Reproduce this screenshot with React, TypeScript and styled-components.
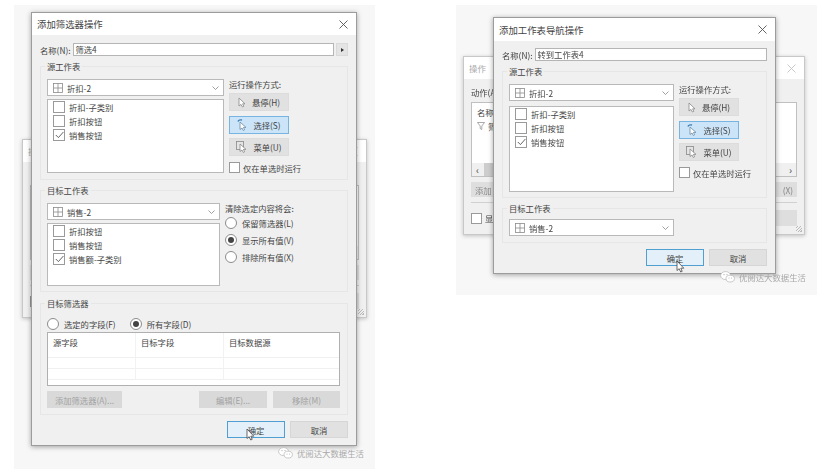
import React from "react";
import styled, { createGlobalStyle } from "styled-components";

const GlobalStyle = createGlobalStyle`
  html, body {
    margin: 0;
    padding: 0;
    background: #fff;
    overflow: hidden;
  }
  body {
    font-family: "Noto Sans CJK SC", "Liberation Sans", sans-serif;
    font-size: 8.3px;
    color: #444;
  }
`;

const SheetIcon = () => (
  <svg width="10" height="10" viewBox="0 0 10 10" fill="none" stroke="#8a8a8a" strokeWidth="0.8">
    <rect x="0.5" y="0.5" width="9" height="9" />
    <path d="M5 0.5V9.5M0.5 5H9.5" />
  </svg>
);

const Chevron = () => (
  <svg width="7" height="4" viewBox="0 0 7 4" fill="none" stroke="#888" strokeWidth="0.8">
    <path d="M0.5 0.5L3.5 3.5L6.5 0.5" />
  </svg>
);

const CloseIcon = ({ color = "#555" }: { color?: string }) => (
  <svg width="9" height="9" viewBox="0 0 9 9" fill="none" stroke={color} strokeWidth="0.9">
    <path d="M0.5 0.5L8.5 8.5M8.5 0.5L0.5 8.5" />
  </svg>
);

const CheckMark = () => (
  <svg width="9" height="8" viewBox="0 0 9 8" fill="none" stroke="#555" strokeWidth="0.9">
    <path d="M0.8 4L3.4 6.6L8.4 1" />
  </svg>
);

const HoverCursor = () => (
  <svg width="8" height="11" viewBox="0 0 8 11" fill="#fff" stroke="#888" strokeWidth="0.8">
    <path d="M1 1V9L3 7.4L4.4 10L5.8 9.3L4.6 6.8H7Z" />
  </svg>
);

const SelectCursor = () => (
  <svg width="10" height="12" viewBox="0 0 10 12" fill="#fff" stroke="#6a8aa5" strokeWidth="0.8">
    <path d="M1 2.5a3 2 0 0 1 4-1.5" stroke="#3f7fb5" strokeWidth="1.4" fill="none" />
    <path d="M3 3V10.5L5 9L6.3 11.5L7.6 10.8L6.4 8.4H9Z" />
  </svg>
);

const MenuCursor = () => (
  <svg width="11" height="12" viewBox="0 0 11 12" fill="#fff" stroke="#888" strokeWidth="0.8">
    <rect x="0.5" y="0.5" width="7" height="8" fill="#e4e4e4" />
    <path d="M4 3V10.5L6 9L7.3 11.5L8.6 10.8L7.4 8.4H10Z" />
  </svg>
);

const WeChatIcon = () => (
  <svg width="15" height="12" viewBox="0 0 15 12" fill="#fff" stroke="#b5b5b5" strokeWidth="0.7">
    <ellipse cx="5.6" cy="4.6" rx="5" ry="4" />
    <ellipse cx="10.2" cy="7.6" rx="4.2" ry="3.4" />
    <circle cx="4" cy="3.6" r="0.6" fill="#aaa" stroke="none" />
    <circle cx="7" cy="3.6" r="0.6" fill="#aaa" stroke="none" />
    <circle cx="9" cy="7" r="0.5" fill="#aaa" stroke="none" />
    <circle cx="11.6" cy="7" r="0.5" fill="#aaa" stroke="none" />
  </svg>
);

const MouseCursor = () => (
  <svg width="9" height="13" viewBox="0 0 9 13" fill="#fff" stroke="#444" strokeWidth="0.8">
    <path d="M1 1V10.5L3.2 8.7L4.7 12L6.2 11.3L4.8 8.2H7.8Z" />
  </svg>
);

const Page = styled.div`
  width: 818px;
  height: 469px;
  display: flex;
  align-items: flex-start;
  padding: 5px 1px 0 14px;
  box-sizing: border-box;
  gap: 81px;
  filter: blur(0.45px);
`;

const Shot = styled.div<{ $height: number }>`
  position: relative;
  width: 361px;
  height: ${(p) => p.$height}px;
  background: #f7f7f7;
  flex: none;
`;

const Win = styled.div<{ $x: number; $y: number; $w: number; $h: number }>`
  position: absolute;
  left: ${(p) => p.$x}px;
  top: ${(p) => p.$y}px;
  width: ${(p) => p.$w}px;
  height: ${(p) => p.$h}px;
  box-sizing: border-box;
  background: #f0f0f0;
  border: 1px solid #9c9c9c;
  box-shadow: 0 1px 5px rgba(0, 0, 0, 0.35);
  display: flex;
  flex-direction: column;
`;

const BackWin = styled(Win)`
  border-color: #c8c8c8;
  box-shadow: 0 1px 4px rgba(0, 0, 0, 0.22);
`;

const TitleBar = styled.div<{ $height: number; $inactive?: boolean }>`
  height: ${(p) => p.$height}px;
  flex: none;
  background: #fff;
  display: flex;
  align-items: center;
  justify-content: space-between;
  padding: 0 8px 0 5px;
  font-size: ${(p) => (p.$inactive ? 8.5 : 9.4)}px;
  color: ${(p) => (p.$inactive ? "#aaa" : "#444")};
`;

const Body = styled.div<{ $top: number }>`
  padding: ${(p) => p.$top}px 8px 0 8px;
  display: flex;
  flex-direction: column;
`;

const NameRow = styled.div`
  display: flex;
  align-items: center;
  height: 13px;
  gap: 2px;
`;

const NameInput = styled.div`
  flex: 1;
  height: 13px;
  box-sizing: border-box;
  background: #fff;
  border: 1px solid #b5b5b5;
  padding-left: 2px;
  line-height: 11px;
`;

const ArrowButton = styled.div`
  width: 10px;
  height: 11px;
  background: #e4e4e4;
  border: 1px solid #dadada;
  display: flex;
  align-items: center;
  justify-content: center;
  &::after {
    content: "";
    border-left: 3px solid #333;
    border-top: 2px solid transparent;
    border-bottom: 2px solid transparent;
  }
`;

const Group = styled.div<{ $mt: number; $height: number; $pt: number }>`
  position: relative;
  margin-top: ${(p) => p.$mt}px;
  height: ${(p) => p.$height}px;
  box-sizing: border-box;
  padding: ${(p) => p.$pt}px 7px 0 6px;
  border: 1px solid #e6e6e6;
`;

const Legend = styled.span`
  position: absolute;
  left: 4px;
  top: -7px;
  padding: 0 2px;
  background: #f0f0f0;
  line-height: 12px;
`;

const Columns = styled.div<{ $left: number }>`
  display: grid;
  grid-template-columns: ${(p) => p.$left}px 1fr;
  column-gap: 5px;
`;

const Stack = styled.div`
  display: flex;
  flex-direction: column;
`;

const SelectBox = styled.div<{ $width?: number }>`
  width: ${(p) => (p.$width ? `${p.$width}px` : "auto")};
  height: 17px;
  box-sizing: border-box;
  background: #fff;
  border: 1px solid #b9b9b9;
  display: flex;
  align-items: center;
  padding: 0 4px 0 5px;
  gap: 4px;
  span {
    flex: 1;
  }
`;

const ListBox = styled.div<{ $height: number; $mt: number }>`
  margin-top: ${(p) => p.$mt}px;
  height: ${(p) => p.$height}px;
  box-sizing: border-box;
  background: #fff;
  border: 1px solid #b9b9b9;
  padding-left: 5px;
  display: flex;
  flex-direction: column;
`;

const CheckRow = styled.div<{ $gap?: number }>`
  display: flex;
  align-items: center;
  gap: ${(p) => p.$gap ?? 4}px;
  height: 14px;
  flex: none;
`;

const Box = styled.div<{ $size?: number }>`
  width: ${(p) => p.$size ?? 12}px;
  height: ${(p) => p.$size ?? 12}px;
  box-sizing: border-box;
  flex: none;
  background: #fff;
  border: 1px solid #9a9a9a;
  display: flex;
  align-items: center;
  justify-content: center;
`;

const SideLabel = styled.div<{ $height: number }>`
  height: ${(p) => p.$height}px;
  line-height: 11px;
`;

const ModeButton = styled.div<{ $active?: boolean }>`
  width: 60px;
  height: 18px;
  box-sizing: border-box;
  margin-bottom: 4.5px;
  display: flex;
  align-items: center;
  justify-content: center;
  gap: 6px;
  background: ${(p) => (p.$active ? "#cbe4f8" : "#e1e1e1")};
  border: 1px solid ${(p) => (p.$active ? "#78b4e2" : "#dcdcdc")};
`;

const RadioRow = styled.div<{ $height?: number }>`
  display: flex;
  align-items: center;
  gap: 5px;
  height: ${(p) => p.$height ?? 17}px;
`;

const Radio = styled.div<{ $on?: boolean }>`
  width: 10px;
  height: 10px;
  flex: none;
  border-radius: 50%;
  background: #fff;
  border: 1px solid #8c8c8c;
  display: flex;
  align-items: center;
  justify-content: center;
  &::after {
    content: "";
    width: 6px;
    height: 6px;
    border-radius: 50%;
    background: ${(p) => (p.$on ? "#444" : "transparent")};
  }
`;

const RadioLine = styled.div`
  display: flex;
  gap: 14px;
  height: 14px;
  align-items: center;
`;

const FieldTable = styled.div`
  margin-top: 1px;
  height: 54px;
  box-sizing: border-box;
  background: #fff;
  border: 1px solid #b0b0b0;
  display: grid;
  grid-template-columns: 88px 88px 1fr;
  grid-template-rows: 25px 11px 11px 1fr;
`;

const FieldCell = styled.div<{ $last?: boolean }>`
  padding: 3px 0 0 5px;
  border-right: ${(p) => (p.$last ? "none" : "1px solid #f2f2f2")};
  border-bottom: 1px solid #f0f0f0;
`;

const ActionRow = styled.div`
  margin-top: 5px;
  display: flex;
  gap: 6px;
`;

const GreyButton = styled.div<{ $width: number; $push?: boolean }>`
  width: ${(p) => p.$width}px;
  height: 17px;
  margin-left: ${(p) => (p.$push ? "auto" : "0")};
  background: #d9d9d9;
  color: #a2a2a2;
  display: flex;
  align-items: center;
  justify-content: center;
`;

const Footer = styled.div`
  margin-top: 6px;
  display: flex;
  justify-content: flex-end;
  gap: 5px;
`;

const FooterButton = styled.div<{ $primary?: boolean }>`
  position: relative;
  width: 58px;
  height: 17px;
  box-sizing: border-box;
  display: flex;
  align-items: center;
  justify-content: center;
  background: ${(p) => (p.$primary ? "#e3f0fa" : "#e1e1e1")};
  border: 1px solid ${(p) => (p.$primary ? "#4f9fd0" : "#d6d6d6")};
`;

const CursorSpot = styled.div<{ $x: number; $y: number }>`
  position: absolute;
  left: ${(p) => p.$x}px;
  top: ${(p) => p.$y}px;
  line-height: 0;
`;

const Watermark = styled.div<{ $x: number; $y: number }>`
  position: absolute;
  left: ${(p) => p.$x}px;
  top: ${(p) => p.$y}px;
  display: flex;
  align-items: center;
  gap: 4px;
  color: #a8a8a8;
  font-size: 8.4px;
  white-space: nowrap;
`;

const BackBody = styled.div`
  flex: 1;
  padding: 7px 7px 0 7px;
  display: flex;
  flex-direction: column;
`;

const BackLabel = styled.div`
  height: 12px;
  line-height: 12px;
`;

const BackTable = styled.div`
  margin-top: 4px;
  height: 75px;
  box-sizing: border-box;
  background: #fff;
  border: 1px solid #c0c0c0;
  padding: 3px 0 0 5px;
  display: flex;
  flex-direction: column;
  position: relative;
`;

const FilterRow = styled.div`
  margin-top: 2px;
  display: flex;
  gap: 3px;
  align-items: center;
`;

const ScrollBar = styled.div`
  position: absolute;
  left: 0;
  right: 0;
  bottom: 0;
  height: 13px;
  display: flex;
  align-items: center;
  background: #f0f0f0;
  padding: 0 4px;
  font-size: 10px;
  color: #444;
`;

const ScrollThumb = styled.div`
  width: 220px;
  height: 100%;
  margin: 0 auto 0 5px;
  background: #cdcdcd;
`;

const BackActions = styled.div`
  margin-top: 5px;
  display: flex;
  justify-content: space-between;
`;

const BackButton = styled.div<{ $end?: boolean; $height?: number }>`
  width: 60px;
  height: ${(p) => p.$height ?? 15}px;
  padding: 0 4px;
  box-sizing: border-box;
  background: #dedede;
  color: #888;
  display: flex;
  align-items: center;
  justify-content: ${(p) => (p.$end ? "flex-end" : "flex-start")};
`;

const BackRule = styled.div`
  margin-top: 5px;
  border-top: 1px solid #d0d0d0;
`;

const BackFooter = styled.div`
  margin-top: 7px;
  display: flex;
  justify-content: space-between;
  align-items: center;
`;

const Grip = styled.div`
  position: absolute;
  right: 2px;
  bottom: 2px;
  width: 6px;
  height: 6px;
  background: repeating-linear-gradient(135deg, transparent 0 1px, #bbb 1px 2px);
`;

// the left shot only shows the edges of this window, so it skips the covered text
const BackWindow = ({ x, y, w, h, bare }: { x: number; y: number; w: number; h: number; bare?: boolean }) => (
  <BackWin $x={x} $y={y} $w={w} $h={h}>
    <TitleBar $height={22} $inactive>
      操作
      <CloseIcon color="#c4c4c4" />
    </TitleBar>
    <BackBody>
      <BackLabel>{!bare && "动作(A):"}</BackLabel>
      <BackTable>
        {!bare && <div>名称</div>}
        {!bare && (
          <FilterRow>
            <svg width="8" height="8" viewBox="0 0 8 8" fill="none" stroke="#888" strokeWidth="0.7">
              <path d="M0.5 0.5H7.5L4.8 4V7.5L3.2 6.6V4Z" />
            </svg>
            筛选
          </FilterRow>
        )}
        <ScrollBar>
          <span>‹</span>
          <ScrollThumb />
          <span>›</span>
        </ScrollBar>
      </BackTable>
      <BackActions>
        <BackButton>{!bare && "添加"}</BackButton>
        <BackButton $end>{!bare && "(X)"}</BackButton>
      </BackActions>
      <BackRule />
      <BackFooter>
        <CheckRow $gap={3}>
          <Box $size={11} />
          {!bare && "显示"}
        </CheckRow>
        <BackButton $height={16} />
      </BackFooter>
    </BackBody>
    <Grip />
  </BackWin>
);

type CheckItem = { label: string; checked?: boolean };

const CheckList = ({ items, height, mt = 3 }: { items: CheckItem[]; height: number; mt?: number }) => (
  <ListBox $height={height} $mt={mt}>
    {items.map((item) => (
      <CheckRow key={item.label}>
        <Box>{item.checked && <CheckMark />}</Box>
        {item.label}
      </CheckRow>
    ))}
  </ListBox>
);

const SheetSelect = ({ label, width }: { label: string; width?: number }) => (
  <SelectBox $width={width}>
    <SheetIcon />
    <span>{label}</span>
    <Chevron />
  </SelectBox>
);

const RunModes = () => (
  <Stack>
    <SideLabel $height={14}>运行操作方式:</SideLabel>
    <ModeButton>
      <HoverCursor />
      悬停(H)
    </ModeButton>
    <ModeButton $active>
      <SelectCursor />
      选择(S)
    </ModeButton>
    <ModeButton>
      <MenuCursor />
      菜单(U)
    </ModeButton>
    <CheckRow $gap={3}>
      <Box $size={11} />
      仅在单选时运行
    </CheckRow>
  </Stack>
);

const FooterButtons = ({ cursorX, cursorY }: { cursorX: number; cursorY: number }) => (
  <Footer>
    <FooterButton $primary>
      确定
      <CursorSpot $x={cursorX} $y={cursorY}>
        <MouseCursor />
      </CursorSpot>
    </FooterButton>
    <FooterButton>取消</FooterButton>
  </Footer>
);

export default function App() {
  return (
    <>
      <GlobalStyle />
      <Page>
        <Shot $height={464}>
          <BackWindow x={8} y={134} w={345} h={179} bare />
          <Win $x={17} $y={7} $w={326} $h={434}>
            <TitleBar $height={22}>
              添加筛选器操作
              <CloseIcon />
            </TitleBar>
            <Body $top={8}>
              <NameRow>
                名称(N):
                <NameInput>筛选4</NameInput>
                <ArrowButton />
              </NameRow>
              <Group $mt={10} $height={114} $pt={12}>
                <Legend>源工作表</Legend>
                <Columns $left={177}>
                  <Stack>
                    <SheetSelect label="折扣-2" />
                    <CheckList
                      height={74}
                      items={[
                        { label: "折扣-子类别" },
                        { label: "折扣按钮" },
                        { label: "销售按钮", checked: true },
                      ]}
                    />
                  </Stack>
                  <RunModes />
                </Columns>
              </Group>
              <Group $mt={10} $height={102} $pt={12}>
                <Legend>目标工作表</Legend>
                <Columns $left={173}>
                  <Stack>
                    <SheetSelect label="销售-2" />
                    <CheckList
                      height={63}
                      items={[
                        { label: "折扣按钮" },
                        { label: "销售按钮" },
                        { label: "销售额-子类别", checked: true },
                      ]}
                    />
                  </Stack>
                  <Stack>
                    <SideLabel $height={11}>清除选定内容将会:</SideLabel>
                    <RadioRow>
                      <Radio />
                      保留筛选器(L)
                    </RadioRow>
                    <RadioRow>
                      <Radio $on />
                      显示所有值(V)
                    </RadioRow>
                    <RadioRow>
                      <Radio />
                      排除所有值(X)
                    </RadioRow>
                  </Stack>
                </Columns>
              </Group>
              <Group $mt={11} $height={112} $pt={13}>
                <Legend>目标筛选器</Legend>
                <RadioLine>
                  <RadioRow $height={14}>
                    <Radio />
                    选定的字段(F)
                  </RadioRow>
                  <RadioRow $height={14}>
                    <Radio $on />
                    所有字段(D)
                  </RadioRow>
                </RadioLine>
                <FieldTable>
                  <FieldCell>源字段</FieldCell>
                  <FieldCell>目标字段</FieldCell>
                  <FieldCell $last>目标数据源</FieldCell>
                  <FieldCell />
                  <FieldCell />
                  <FieldCell $last />
                  <FieldCell />
                  <FieldCell />
                  <FieldCell $last />
                </FieldTable>
                <ActionRow>
                  <GreyButton $width={75}>添加筛选器(A)...</GreyButton>
                  <GreyButton $width={68} $push>
                    编辑(E)...
                  </GreyButton>
                  <GreyButton $width={67}>移除(M)</GreyButton>
                </ActionRow>
              </Group>
              <FooterButtons cursorX={18} cursorY={6} />
            </Body>
          </Win>
          <Watermark $x={264} $y={442}>
            <WeChatIcon />
            优阅达大数据生活
          </Watermark>
        </Shot>
        <Shot $height={290}>
          <BackWindow x={7} y={51} w={342} h={179} />
          <Win $x={37} $y={12} $w={283} $h={257}>
            <TitleBar $height={23}>
              添加工作表导航操作
              <CloseIcon />
            </TitleBar>
            <Body $top={7}>
              <NameRow>
                名称(N):
                <NameInput>转到工作表4</NameInput>
              </NameRow>
              <Group $mt={10} $height={127} $pt={12}>
                <Legend>源工作表</Legend>
                <Columns $left={165}>
                  <Stack>
                    <SheetSelect label="折扣-2" />
                    <CheckList
                      height={86}
                      mt={5}
                      items={[
                        { label: "折扣-子类别" },
                        { label: "折扣按钮" },
                        { label: "销售按钮", checked: true },
                      ]}
                    />
                  </Stack>
                  <RunModes />
                </Columns>
              </Group>
              <Group $mt={10} $height={35} $pt={10}>
                <Legend>目标工作表</Legend>
                <SheetSelect label="销售-2" width={165} />
              </Group>
              <FooterButtons cursorX={29} cursorY={10} />
            </Body>
          </Win>
          <Watermark $x={264} $y={266}>
            <WeChatIcon />
            优阅达大数据生活
          </Watermark>
        </Shot>
      </Page>
    </>
  );
}
